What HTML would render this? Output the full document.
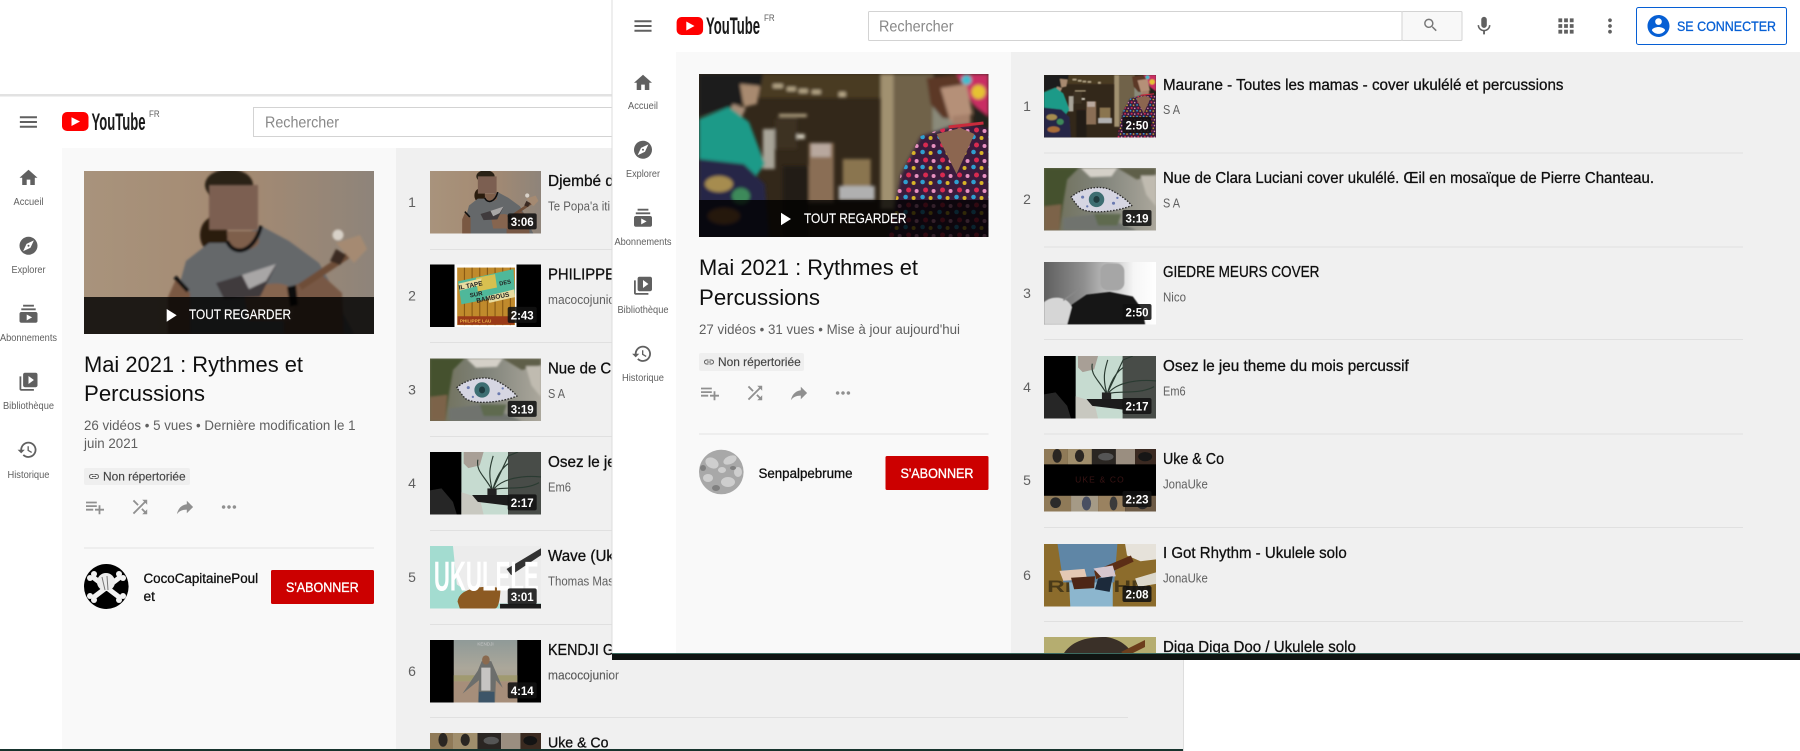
<!DOCTYPE html>
<html lang="fr"><head><meta charset="utf-8"><title>YouTube</title>
<style>
html,body{margin:0;padding:0;background:#fff;width:1800px;height:751px;overflow:hidden}
svg{display:block}
text{font-family:"Liberation Sans",Arial,sans-serif}
.t{font-size:16px;fill:#0f0f0f;stroke:#0f0f0f;stroke-width:.3px}
.c{font-size:13px;fill:#606060}
.n{font-size:14px;fill:#606060;text-anchor:middle}
.s{font-size:10.5px;fill:#606060;text-anchor:middle}
.d{font-size:12px;font-weight:bold;fill:#fff;text-anchor:middle}
.h{font-size:22px;fill:#0f0f0f}
.m{font-size:13.5px;fill:#606060}
.b{font-size:12px;fill:#444;stroke:#444;stroke-width:.15px}
.w{font-size:14px;fill:#fff;stroke:#fff;stroke-width:.15px}
.o{font-size:13.5px;fill:#0f0f0f;stroke:#0f0f0f;stroke-width:.3px}
.r{font-size:14px;fill:#fff;stroke:#fff;stroke-width:.35px}
.y{font-size:24px;font-weight:bold;fill:#1a1a1a}
.f{font-size:9px;fill:#606060}
.q{font-size:16px;fill:#888}
.ic{fill:#606060}
.ac{fill:#909090}
</style></head><body>
<svg xmlns="http://www.w3.org/2000/svg" width="1800" height="751" viewBox="0 0 1800 751" style="overflow:hidden">
<defs>
<filter id="bl" x="-5%" y="-5%" width="110%" height="110%"><feGaussianBlur stdDeviation="1"/></filter>
<filter id="bl2" x="-10%" y="-10%" width="120%" height="120%"><feGaussianBlur stdDeviation="1.6"/></filter>
<filter id="bl3" x="-10%" y="-10%" width="120%" height="120%"><feGaussianBlur stdDeviation="3"/></filter>
<linearGradient id="ga" x1="0" x2="1" y1="0" y2="0"><stop offset="0" stop-color="#a8937c"/><stop offset=".55" stop-color="#a48a72"/><stop offset="1" stop-color="#8e847a"/></linearGradient>
<linearGradient id="ge" x1="0" x2="1" y1="0" y2="0"><stop offset="0" stop-color="#5f5f5f"/><stop offset=".35" stop-color="#8e8e8e"/><stop offset=".6" stop-color="#c4c4c4"/><stop offset=".8" stop-color="#f6f6f6"/><stop offset="1" stop-color="#fff"/></linearGradient>
<linearGradient id="gc" x1="0" x2="1" y1="0" y2="0"><stop offset="0" stop-color="#6d6d55"/><stop offset=".5" stop-color="#80837a"/><stop offset="1" stop-color="#aba79c"/></linearGradient>
<linearGradient id="gh" x1="0" x2="0" y1="0" y2="1"><stop offset="0" stop-color="#8f9a98"/><stop offset=".45" stop-color="#aba79a"/><stop offset="1" stop-color="#a69582"/></linearGradient>
<pattern id="dots" width="17" height="15" patternUnits="userSpaceOnUse">
<circle cx="3" cy="3" r="2.3" fill="#2f9fd0"/><circle cx="11" cy="4" r="2" fill="#d8b428"/><circle cx="6" cy="11" r="2.5" fill="#d82a50"/><circle cx="14" cy="12" r="2" fill="#e890c0"/>
</pattern>

<symbol id="a" viewBox="0 0 290 163" preserveAspectRatio="none">
<rect width="290" height="163" fill="url(#ga)"/>
<g filter="url(#bl)">
<ellipse cx="145" cy="14" rx="24" ry="16" fill="#2c2019"/>
<ellipse cx="130" cy="64" rx="14" ry="18" fill="#2a1a11"/>
<path d="M85 163 95 115 102 90 125 72 142 72 177 55 205 70 235 92 245 110 258 140 270 163z" fill="#65686a"/>
<path d="M92 108 84 126 84 163 106 163 106 122z" fill="#7a5843"/>
<path d="M200 118 238 104 258 122 260 163 200 163z" fill="#785844"/>
<path d="M160 124C182 108 205 110 212 122L208 150 165 150z" fill="#86654f"/>
<path d="M132 112 192 94 176 126 140 128z" fill="#3f3a3c"/>
<path d="M158 104 192 93 182 110 165 118z" fill="#a8a6a6"/>
<path d="M216 116 270 80" stroke="#6e4e38" stroke-width="7"/>
<path d="M252 72 276 64 283 78 270 92z" fill="#a58a72"/>
<path d="M252 78 262 84 256 94 246 90z" fill="#3a2a20"/>
<circle cx="254" cy="64" r="5.5" fill="#d8d1c8"/>
<path d="M143 60H175V72C170 80 150 84 144 72z" fill="#7e5f4c"/>
<path d="M143 70C150 86 170 82 177 55" stroke="#0e0e0e" stroke-width="4" fill="none"/>
<path d="M203 116 212 114 214 134 206 136z" fill="#111"/>
<path d="M91 106 104 120" stroke="#0e0e0e" stroke-width="4"/>
</g>
<rect x="125" y="14" width="49" height="45" fill="#7b5f51" filter="url(#bl)"/>
</symbol>

<symbol id="b" viewBox="0 0 290 163" preserveAspectRatio="none">
<rect width="290" height="163" fill="#33281a"/>
<g filter="url(#bl2)">
<rect x="60" width="122" height="24" fill="#4a3a24"/>
<g fill="#b8a888"><rect x="74" y="10" width="10" height="4"/><rect x="88" y="13" width="9" height="4"/><rect x="100" y="15" width="9" height="4"/><rect x="113" y="16" width="9" height="4"/><rect x="140" y="18" width="7" height="5"/><rect x="80" y="40" width="28" height="3"/></g>
<rect x="86" y="60" width="20" height="5" fill="#cfc9ba"/>
<rect x="76" y="45" width="22" height="30" fill="#3e3224"/>
<rect x="84" y="92" width="26" height="71" fill="#241e16"/>
<rect x="110" y="69" width="25" height="60" fill="#8a6e54"/>
<rect x="112" y="69" width="20" height="14" fill="#b8a89e"/>
<rect x="144" y="85" width="28" height="32" fill="#8a7450"/>
<rect x="140" y="112" width="36" height="14" fill="#b0b0b0"/>
<rect x="64" y="55" width="12" height="40" fill="#a8a498"/>
<rect x="182" width="13" height="135" fill="#a19170"/>
<rect x="195" width="40" height="130" fill="#6f6248"/>
<rect x="234" y="30" width="22" height="40" fill="#8a8a7a"/>
<rect x="276" y="30" width="14" height="40" fill="#23201b"/>
<path d="M0 0H64L62 12 42 30 0 42z" fill="#1b1f1a"/>
<path d="M41 10 61 12 58 30 45 33z" fill="#a88a70"/>
<path d="M34 30 47 34 42 45 28 42z" fill="#a68d78"/>
<path d="M0 45 30 33 50 48 66 90 50 112 0 90z" fill="#1c9a88"/>
<path d="M0 85 45 90 66 110 70 163H0z" fill="#272747"/>
<ellipse cx="20" cy="110" rx="14" ry="8" fill="#a68c50"/>
<ellipse cx="42" cy="122" rx="9" ry="8" fill="#3d8a5a"/>
<ellipse cx="25" cy="142" rx="16" ry="8" fill="#a86c38"/>
<path d="M228 4 262 0 264 46 244 44 232 30z" fill="#5c3826"/>
<path d="M258 0H290V42L274 30z" fill="#c92f63"/>
<circle cx="280" cy="18" r="7" fill="#e6c232"/>
<circle cx="268" cy="6" r="5" fill="#3cbfd0"/>
<path d="M242 14 268 10 274 40 252 48z" fill="#b59078"/>
<path d="M254 42 272 40 272 58 254 56z" fill="#a6806a"/>
<path d="M202 100 222 62 252 52 275 50 290 55V163H190z" fill="#3a1c3c"/>
</g>
<path d="M202 100 222 62 252 52 275 50 290 55V163H190z" fill="url(#dots)"/>
<path d="M238 60 258 100 276 60 262 54z" fill="#8c6650"/>
<path d="M250 53 285 49" stroke="#c92c3c" stroke-width="3"/>
</symbol>

<symbol id="c" viewBox="0 0 290 163" preserveAspectRatio="none">
<rect width="290" height="163" fill="url(#gc)"/>
<g filter="url(#bl3)">
<path d="M0 0H90L60 30 50 90 40 163H0z" fill="#45512f"/>
<path d="M0 100 45 95 40 163H0z" fill="#7c6448"/>
<path d="M95 0H190L175 22 120 24z" fill="#d4d0c8"/>
<path d="M190 0H290V18L240 30z" fill="#5f5f48"/>
<path d="M250 20H290V100L265 70z" fill="#c0bbb0"/>
<path d="M50 130 140 120 240 163H50z" fill="#70736e"/>
<path d="M130 120H200L190 150H140z" fill="#5f6a50"/>
</g>
<path d="M70 76C95 52 150 42 178 60 200 72 218 86 227 98 190 114 115 122 92 104 84 96 76 84 70 76z" fill="#d6d6e2" stroke="#2c2c2c" stroke-width="3.5" stroke-dasharray="4 4"/>
<ellipse cx="136" cy="82" rx="20" ry="20" fill="#3d6e72"/>
<ellipse cx="136" cy="82" rx="8" ry="9" fill="#1f3c40"/>
<g fill="#6a7ab0"><circle cx="100" cy="76" r="4"/><circle cx="180" cy="92" r="4"/><circle cx="112" cy="100" r="3"/><circle cx="190" cy="78" r="3"/></g>
</symbol>

<symbol id="d" viewBox="0 0 290 163" preserveAspectRatio="none">
<rect width="290" height="163" fill="#000"/>
<rect x="64" width="162" height="163" fill="#fff"/>
<rect x="71" y="8" width="151" height="150" fill="#c08a2c"/>
<g stroke="#8a5a14" stroke-width="3"><path d="M90 8V158M110 8V158M130 8V158M150 8V158M170 8V158M190 8V158M210 8V158"/></g>
<path d="M73 44 218 12 222 76 82 104z" fill="#4fb89a"/>
<path d="M120 35 170 25 175 60 125 70z" fill="#d8c050"/>
<path d="M75 50 135 36 130 54 78 68z" fill="#e8dca0"/>
<path d="M150 82 220 65 222 85 155 100z" fill="#e8dca0"/>
<rect x="72" y="135" width="148" height="22" fill="#9a3a18"/>
<text x="76" y="66" font-size="17" font-weight="bold" fill="#222" transform="rotate(-11 76 66)" font-family="Liberation Serif">IL TAPE</text>
<text x="105" y="86" font-size="16" font-weight="bold" fill="#222" transform="rotate(-11 105 86)" font-family="Liberation Serif">SUR</text>
<text x="182" y="55" font-size="15" font-weight="bold" fill="#222" transform="rotate(-11 182 55)" font-family="Liberation Serif">DES</text>
<text x="122" y="100" font-size="17" font-weight="bold" fill="#222" transform="rotate(-11 122 100)" font-family="Liberation Serif">BAMBOUS</text>
<text x="78" y="151" font-size="12" font-weight="bold" fill="#e8b048" font-family="Liberation Serif">PHILIPPE LAU</text>
</symbol>

<symbol id="e" viewBox="0 0 290 163" preserveAspectRatio="none">
<rect width="290" height="163" fill="url(#ge)"/>
<g filter="url(#bl2)">
<path d="M45 130 110 85 170 78 230 90 255 125 262 163H50z" fill="#141414"/>
<path d="M0 105C22 85 62 90 72 118L60 163H0z" fill="#d6d6d6"/>
<path d="M50 100 92 70" stroke="#888" stroke-width="4"/>
</g>
<rect x="146" y="4" width="62" height="70" rx="20" fill="#a6a6a6" filter="url(#bl2)"/>
</symbol>

<symbol id="f" viewBox="0 0 290 163" preserveAspectRatio="none">
<rect width="290" height="163" fill="#000"/>
<rect x="82" width="122" height="163" fill="#c6dbd0"/>
<rect x="204" width="86" height="163" fill="#484c48"/>
<g filter="url(#bl)">
<path d="M88 0H140L130 35 100 42 88 30z" fill="#a89f96"/>
<path d="M0 100 30 95 60 130 70 163H0z" fill="#262626"/>
<path d="M82 105 130 120 140 163H82z" fill="#c8c8c0"/>
<path d="M110 112H205V140L125 130z" fill="#1c1c1c"/>
<path d="M160 95C140 60 120 50 125 20M162 95C150 50 160 30 165 10M165 95C175 60 190 40 205 30M168 95C190 70 240 60 290 65M165 98C200 90 250 100 285 80M165 95 205 10 230 0" stroke="#2a3a30" stroke-width="3" fill="none"/>
<rect x="150" y="95" width="24" height="18" fill="#222"/>
</g>
</symbol>

<symbol id="g" viewBox="0 0 290 163" preserveAspectRatio="none">
<rect width="290" height="163" fill="#a3dcd0"/>
<g filter="url(#bl)">
<path d="M60 0H290V150H140L70 100z" fill="#ececec"/>
<path d="M200 60 290 6V24L212 76z" fill="#333"/>
<path d="M72 145C75 118 110 106 160 106L184 110C184 130 180 163 170 163H78z" fill="#8c5a20"/>
<rect x="183" y="151" width="107" height="12" fill="#1a1a1a"/>
</g>
<text x="10" y="116" font-size="108" font-weight="bold" fill="#fff" textLength="274" lengthAdjust="spacingAndGlyphs">UKULELE</text>
</symbol>

<symbol id="h" viewBox="0 0 290 163" preserveAspectRatio="none">
<rect width="290" height="163" fill="#000"/>
<rect x="62" width="166" height="163" fill="url(#gh)"/>
<g filter="url(#bl)">
<path d="M62 92H228V108H62z" fill="#a09a70"/>
<path d="M62 108H228V163H62z" fill="#a68e7a"/>
<path d="M135 55H160L190 125 172 105 170 163H125L128 105 85 140 125 80z" fill="#6c6e6c"/>
<rect x="134" y="72" width="24" height="60" fill="#c6c4c2"/>
<ellipse cx="146" cy="52" rx="10" ry="12" fill="#8a6a50"/>
<rect x="128" y="135" width="40" height="28" fill="#3c5468"/>
</g>
<text x="145" y="14" font-size="12" fill="#c8c8c8" text-anchor="middle">KENDJI</text>
</symbol>

<symbol id="i" viewBox="0 0 290 163" preserveAspectRatio="none">
<rect width="290" height="163" fill="#000"/>
<g filter="url(#bl)">
<rect width="62" height="40" fill="#8f7a58"/><rect x="62" width="62" height="40" fill="#a08e6c"/><rect x="124" width="62" height="40" fill="#2a2522"/><rect x="186" width="50" height="40" fill="#9a8e80"/><rect x="236" width="54" height="40" fill="#3a2a20"/>
<ellipse cx="34" cy="18" rx="12" ry="18" fill="#2a2622"/><ellipse cx="92" cy="18" rx="12" ry="16" fill="#2a2622"/><ellipse cx="160" cy="20" rx="20" ry="10" fill="#555"/><ellipse cx="262" cy="20" rx="18" ry="12" fill="#141414"/>
<rect y="122" width="70" height="41" fill="#8f7a58"/><rect x="70" y="122" width="70" height="41" fill="#a59a86"/><rect x="140" y="122" width="70" height="41" fill="#9a8260"/><rect x="210" y="122" width="80" height="41" fill="#6c5a44"/>
<ellipse cx="30" cy="140" rx="14" ry="14" fill="#2a2a2a"/><ellipse cx="110" cy="142" rx="12" ry="18" fill="#4a4f62"/><ellipse cx="180" cy="142" rx="10" ry="18" fill="#3a3a3a"/><ellipse cx="255" cy="145" rx="14" ry="12" fill="#2c2c2c"/>
</g>
<text x="145" y="88" font-size="22" fill="#3a1414" text-anchor="middle" letter-spacing="3">UKE &amp; CO</text>
</symbol>

<symbol id="i2" viewBox="0 0 290 42" preserveAspectRatio="none">
<rect width="62" height="42" fill="#8f7a58"/><rect x="62" width="62" height="42" fill="#a08e6c"/><rect x="124" width="62" height="42" fill="#2a2522"/><rect x="186" width="50" height="42" fill="#9a8e80"/><rect x="236" width="54" height="42" fill="#3a2a20"/>
<ellipse cx="34" cy="18" rx="12" ry="18" fill="#2a2622"/><ellipse cx="92" cy="18" rx="12" ry="16" fill="#2a2622"/><ellipse cx="160" cy="20" rx="20" ry="10" fill="#555"/><ellipse cx="262" cy="20" rx="18" ry="12" fill="#141414"/>
</symbol>

<symbol id="j" viewBox="0 0 290 163" preserveAspectRatio="none">
<rect width="290" height="163" fill="#8c6c2c"/>
<text x="8" y="125" font-size="44" font-weight="bold" fill="#4a3a18" textLength="270" lengthAdjust="spacingAndGlyphs">RHYTHM</text>
<g filter="url(#bl)">
<path d="M35 0H190L182 100H50z" fill="#5f86a6"/>
<path d="M65 100H178V163H68z" fill="#8cb6ce"/>
<path d="M210 0H290V40L250 45 215 30z" fill="#e6e2da"/>
<path d="M236 90 290 74V104L244 112z" fill="#dcd8cc"/>
<path d="M40 70 105 65 112 92 50 96z" fill="#e4c8b4"/>
<path d="M70 88 132 84 130 115 78 118z" fill="#4e2812"/>
<path d="M130 70 178 50 225 30 232 46 180 70 135 92z" fill="#5c2e16"/>
<path d="M128 64 178 56 186 84 150 88z" fill="#d6c6ce"/>
<path d="M140 90 178 84 170 125 132 118z" fill="#1d2a3a"/>
</g>
</symbol>

<symbol id="k" viewBox="0 0 112 16" preserveAspectRatio="none">
<rect width="112" height="16" fill="#b5ad70"/>
<path d="M20 16C29 3 44 0 62 0 75 2 83 8 88 16Z" fill="#3a3028"/>
<path d="M77 15 101 3 101 10 83 19z" fill="#6c3e1c"/>
</symbol>

<path id="menu" d="M3 18h18v-2H3v2zm0-5h18v-2H3v2zm0-7v2h18V6H3z"/>
<path id="home" d="M10 20v-6h4v6h5v-8h3L12 3 2 12h3v8z"/>
<path id="explore" d="M12 10.9c-.61 0-1.1.49-1.1 1.1s.49 1.1 1.1 1.1c.61 0 1.1-.49 1.1-1.1s-.49-1.1-1.1-1.1zM12 2C6.48 2 2 6.48 2 12s4.48 10 10 10 10-4.48 10-10S17.52 2 12 2zm2.19 12.19L6 18l3.81-8.19L18 6l-3.81 8.19z"/>
<path id="subs" d="M20 8H4V6h16v2zm-2-6H6v2h12V2zm4 10v8c0 1.1-.9 2-2 2H4c-1.1 0-2-.9-2-2v-8c0-1.1.9-2 2-2h16c1.1 0 2 .9 2 2zm-6 4l-6-3.27v6.53L16 16z"/>
<path id="lib" d="M4 6H2v14c0 1.1.9 2 2 2h14v-2H4V6zm16-4H8c-1.1 0-2 .9-2 2v12c0 1.1.9 2 2 2h12c1.1 0 2-.9 2-2V4c0-1.1-.9-2-2-2zm-8 12.5v-9l6 4.5-6 4.5z"/>
<path id="hist" d="M13 3c-4.97 0-9 4.03-9 9H1l3.89 3.89.07.14L9 12H6c0-3.87 3.13-7 7-7s7 3.13 7 7-3.13 7-7 7c-1.93 0-3.68-.79-4.94-2.06l-1.42 1.42C8.27 19.99 10.51 21 13 21c4.97 0 9-4.03 9-9s-4.03-9-9-9zm-1 5v5l4.28 2.54.72-1.21-3.5-2.08V8H12z"/>
<path id="padd" d="M14 10H2v2h12v-2zm0-4H2v2h12V6zm4 8v-4h-2v4h-4v2h4v4h2v-4h4v-2h-4zM2 16h8v-2H2v2z"/>
<path id="shuf" d="M10.59 9.17L5.41 4 4 5.41l5.17 5.17 1.42-1.41zM14.5 4l2.04 2.04L4 18.59 5.41 20 17.96 7.46 20 9.5V4h-5.5zm.33 9.41l-1.41 1.41 3.13 3.13L14.5 20H20v-5.5l-2.04 2.04-3.13-3.13z"/>
<path id="share" d="M14 9V5l7 7-7 7v-4.1c-5 0-8.5 1.6-11 5.1 1-5 4-10 11-11z"/>
<path id="more" d="M6 10c-1.1 0-2 .9-2 2s.9 2 2 2 2-.9 2-2-.9-2-2-2zm12 0c-1.1 0-2 .9-2 2s.9 2 2 2 2-.9 2-2-.9-2-2-2zm-6 0c-1.1 0-2 .9-2 2s.9 2 2 2 2-.9 2-2-.9-2-2-2z"/>
<path id="link" d="M3.9 12c0-1.71 1.39-3.1 3.1-3.1h4V7H7c-2.76 0-5 2.24-5 5s2.24 5 5 5h4v-1.9H7c-1.71 0-3.1-1.39-3.1-3.1zM8 13h8v-2H8v2zm9-6h-4v1.9h4c1.71 0 3.1 1.39 3.1 3.1s-1.39 3.1-3.1 3.1h-4V17h4c2.76 0 5-2.24 5-5s-2.24-5-5-5z"/>
</defs>

<rect width="1800" height="751" fill="#fff"/>

<!-- LEFT WINDOW -->
<rect x="0" y="94" width="1184" height="2.5" fill="#e2e2e2"/>
<rect x="0" y="96.5" width="1183" height="652" fill="#fff"/>
<rect x="62" y="148" width="334" height="601" fill="#f9f9f9"/>
<rect x="396" y="148" width="787" height="601" fill="#f0f0f0"/>
<rect x="1183" y="96" width="1" height="655" fill="#dedede"/>

<use href="#menu" class="ic" transform="translate(17 110.6) scale(.95)"/>
<rect x="62" y="112" width="26.5" height="19" rx="5" fill="#f00"/>
<path d="M71.5 117.2 80 121.5 71.5 126z" fill="#fff"/>
<text class="y" x="91.5" y="130" textLength="54" lengthAdjust="spacingAndGlyphs">YouTube</text>
<text class="f" x="149" y="117" textLength="10.7" lengthAdjust="spacingAndGlyphs">FR</text>
<rect x="253.5" y="107.5" width="400" height="29" fill="#fff" stroke="#d3d3d3"/>
<text class="q" x="265" y="127.5" textLength="74" lengthAdjust="spacingAndGlyphs">Rechercher</text>

<use href="#home" class="ic" transform="translate(17.7 167) scale(.9)"/>
<text class="s" x="28.5" y="205" textLength="30" lengthAdjust="spacingAndGlyphs">Accueil</text>
<use href="#explore" class="ic" transform="translate(17.7 235) scale(.9)"/>
<text class="s" x="28.5" y="273" textLength="34" lengthAdjust="spacingAndGlyphs">Explorer</text>
<use href="#subs" class="ic" transform="translate(17.7 303) scale(.9)"/>
<text class="s" x="28.5" y="341" textLength="57" lengthAdjust="spacingAndGlyphs">Abonnements</text>
<use href="#lib" class="ic" transform="translate(17.7 371) scale(.9)"/>
<text class="s" x="28.5" y="409" textLength="51" lengthAdjust="spacingAndGlyphs">Bibliothèque</text>
<use href="#hist" class="ic" transform="translate(16.7 439) scale(.9)"/>
<text class="s" x="28.5" y="478" textLength="42" lengthAdjust="spacingAndGlyphs">Historique</text>

<use href="#a" x="84" y="171" width="290" height="163"/>
<rect x="84" y="297" width="290" height="37" fill="#000" fill-opacity=".82"/>
<path d="M166.7 309 176.7 315.3 166.7 321.7z" fill="#fff"/>
<text class="w" x="189" y="319" textLength="102" lengthAdjust="spacingAndGlyphs">TOUT REGARDER</text>
<text class="h" x="84" y="372" textLength="219" lengthAdjust="spacingAndGlyphs">Mai 2021 : Rythmes et</text>
<text class="h" x="84" y="401" textLength="121" lengthAdjust="spacingAndGlyphs">Percussions</text>
<text class="m" x="84" y="430" textLength="271.5" lengthAdjust="spacingAndGlyphs">26 vidéos • 5 vues • Dernière modification le 1</text>
<text class="m" x="84" y="448" textLength="54" lengthAdjust="spacingAndGlyphs">juin 2021</text>
<rect x="84" y="468" width="106" height="17" rx="2" fill="#efefef"/>
<use href="#link" fill="#606060" transform="translate(88 470.5) scale(.5)"/>
<text class="b" x="103" y="480.5" textLength="82.6" lengthAdjust="spacingAndGlyphs">Non répertoriée</text>
<use href="#padd" class="ac" transform="translate(84.2 496.2) scale(.9)"/>
<use href="#shuf" class="ac" transform="translate(129.2 496.2) scale(.9)"/>
<use href="#share" class="ac" transform="translate(174.2 496.2) scale(.9)"/>
<use href="#more" class="ac" transform="translate(218.2 496.2) scale(.9)"/>
<rect x="84" y="547.5" width="290" height="1" fill="#e2e2e2"/>
<ellipse cx="106.3" cy="586.5" rx="22.3" ry="22.5" fill="#000"/>
<g stroke="#f2f2f2" stroke-width="5" stroke-linecap="round"><path d="M94 578 119 597M119 578 94 597"/></g>
<g fill="#f2f2f2"><circle cx="90" cy="578" r="3"/><circle cx="94" cy="574" r="3"/><circle cx="123" cy="578" r="3"/><circle cx="119" cy="574" r="3"/><circle cx="90" cy="596" r="3"/><circle cx="94" cy="600" r="3"/><circle cx="123" cy="596" r="3"/><circle cx="119" cy="600" r="3"/></g>
<ellipse cx="106" cy="582" rx="9" ry="9" fill="#ececec"/>
<path d="M102 577 105 590M107 576 108 590" stroke="#777" stroke-width="1"/>
<text class="o" x="143.5" y="583" textLength="114.6" lengthAdjust="spacingAndGlyphs">CocoCapitainePoul</text>
<text class="o" x="143.5" y="601" textLength="11.5" lengthAdjust="spacingAndGlyphs">et</text>
<rect x="271" y="570" width="103" height="34" rx="1.5" fill="#c00"/>
<text class="r" x="286" y="592" textLength="72.7" lengthAdjust="spacingAndGlyphs">S'ABONNER</text>

<!-- left list -->
<use href="#a" x="430" y="171" width="111" height="62.5"/>
<use href="#d" x="430" y="264.5" width="111" height="62.5"/>
<use href="#c" x="430" y="358.5" width="111" height="62.5"/>
<use href="#f" x="430" y="452" width="111" height="62.5"/>
<use href="#g" x="430" y="546" width="111" height="62.5"/>
<use href="#h" x="430" y="640" width="111" height="62.5"/>
<use href="#i2" x="430" y="733" width="111" height="16"/>
<g fill="#111" fill-opacity=".88">
<rect x="507.7" y="213.4" width="29" height="16" rx="2"/><rect x="507.7" y="306.9" width="29" height="16" rx="2"/><rect x="507.7" y="400.9" width="29" height="16" rx="2"/><rect x="507.7" y="494.4" width="29" height="16" rx="2"/><rect x="507.7" y="588.4" width="29" height="16" rx="2"/><rect x="507.7" y="682.4" width="29" height="16" rx="2"/>
</g>
<text class="d" x="522.2" y="226" textLength="23" lengthAdjust="spacingAndGlyphs">3:06</text>
<text class="d" x="522.2" y="319.5" textLength="23" lengthAdjust="spacingAndGlyphs">2:43</text>
<text class="d" x="522.2" y="413.5" textLength="23" lengthAdjust="spacingAndGlyphs">3:19</text>
<text class="d" x="522.2" y="507" textLength="23" lengthAdjust="spacingAndGlyphs">2:17</text>
<text class="d" x="522.2" y="601" textLength="23" lengthAdjust="spacingAndGlyphs">3:01</text>
<text class="d" x="522.2" y="695" textLength="23" lengthAdjust="spacingAndGlyphs">4:14</text>
<text class="n" x="412" y="207">1</text><text class="n" x="412" y="300.5">2</text><text class="n" x="412" y="394.5">3</text><text class="n" x="412" y="488">4</text><text class="n" x="412" y="582">5</text><text class="n" x="412" y="676">6</text>
<g fill="#e0e0e0"><rect x="430" y="249" width="698" height="1"/><rect x="430" y="342" width="698" height="1"/><rect x="430" y="436" width="698" height="1"/><rect x="430" y="530" width="698" height="1"/><rect x="430" y="624" width="698" height="1"/><rect x="430" y="717" width="698" height="1"/></g>
<text class="t" x="548" y="186" textLength="66" lengthAdjust="spacingAndGlyphs">Djembé d</text>
<text class="c" x="548" y="210.5" textLength="62" lengthAdjust="spacingAndGlyphs">Te Popa'a iti</text>
<text class="t" x="548" y="279.5" textLength="67" lengthAdjust="spacingAndGlyphs">PHILIPPE</text>
<text class="c" x="548" y="304" textLength="71" lengthAdjust="spacingAndGlyphs">macocojunior</text>
<text class="t" x="548" y="373.5" textLength="491" lengthAdjust="spacingAndGlyphs">Nue de Clara Luciani cover ukulélé. Œil en mosaïque de Pierre Chanteau.</text>
<text class="c" x="548" y="398" textLength="17" lengthAdjust="spacingAndGlyphs">S A</text>
<text class="t" x="548" y="467" textLength="245.7" lengthAdjust="spacingAndGlyphs">Osez le jeu theme du mois percussif</text>
<text class="c" x="548" y="491.5" textLength="23" lengthAdjust="spacingAndGlyphs">Em6</text>
<text class="t" x="548" y="561" textLength="66" lengthAdjust="spacingAndGlyphs">Wave (Uk</text>
<text class="c" x="548" y="585.5" textLength="66" lengthAdjust="spacingAndGlyphs">Thomas Mas</text>
<text class="t" x="548" y="655" textLength="66" lengthAdjust="spacingAndGlyphs">KENDJI G</text>
<text class="c" x="548" y="679.5" textLength="71" lengthAdjust="spacingAndGlyphs">macocojunior</text>
<text class="t" x="548" y="747.5" style="font-size:15px" textLength="60.5" lengthAdjust="spacingAndGlyphs">Uke &amp; Co</text>
<rect x="0" y="749" width="1183" height="2" fill="#17342e"/>

<!-- RIGHT WINDOW -->
<rect x="612" y="0" width="1188" height="653" fill="#fff"/>
<rect x="611.5" y="0" width="1" height="653" fill="#dcdcdc"/>
<rect x="676" y="52" width="335" height="601" fill="#f9f9f9"/>
<rect x="1011" y="52" width="789" height="601" fill="#f0f0f0"/>

<use href="#menu" class="ic" transform="translate(631.6 14.6) scale(.95)"/>
<rect x="676.6" y="17" width="26.5" height="18" rx="5" fill="#f00"/>
<path d="M686.3 21.5 694.5 26 686.3 30.5z" fill="#fff"/>
<text class="y" x="706" y="34" textLength="54" lengthAdjust="spacingAndGlyphs">YouTube</text>
<text class="f" x="764" y="21" textLength="10.7" lengthAdjust="spacingAndGlyphs">FR</text>
<rect x="868.5" y="11.5" width="533.5" height="29" rx="1" fill="#fff" stroke="#d3d3d3"/>
<rect x="1402" y="11.5" width="60" height="29" rx="1" fill="#f8f8f8" stroke="#d3d3d3"/>
<text class="q" x="879" y="31.5" textLength="74.5" lengthAdjust="spacingAndGlyphs">Rechercher</text>
<path d="M15.5 14h-.79l-.28-.27C15.41 12.59 16 11.11 16 9.5 16 5.91 13.09 3 9.5 3S3 5.91 3 9.5 5.91 16 9.5 16c1.61 0 3.09-.59 4.23-1.57l.27.28v.79l5 4.99L20.49 19l-4.99-5zm-6 0C7.01 14 5 11.99 5 9.5S7.01 5 9.5 5 14 7.01 14 9.5 11.99 14 9.5 14z" fill="#777" transform="translate(1422 16.5) scale(.72)"/>
<path d="M12 14c1.66 0 3-1.34 3-3V5c0-1.66-1.34-3-3-3S9 3.34 9 5v6c0 1.66 1.34 3 3 3zm5.3-3c0 3-2.54 5.1-5.3 5.1S6.7 14 6.7 11H5c0 3.41 2.72 6.23 6 6.72V21h2v-3.28c3.28-.48 6-3.3 6-6.72h-1.7z" fill="#606060" transform="translate(1473 15) scale(.92)"/>
<path d="M4 8h4V4H4v4zm6 12h4v-4h-4v4zm-6 0h4v-4H4v4zm0-6h4v-4H4v4zm6 0h4v-4h-4v4zm6-10v4h4V4h-4zm-6 4h4V4h-4v4zm6 6h4v-4h-4v4zm0 6h4v-4h-4v4z" fill="#606060" transform="translate(1554.6 14.6) scale(.95)"/>
<path d="M12 8c1.1 0 2-.9 2-2s-.9-2-2-2-2 .9-2 2 .9 2 2 2zm0 2c-1.1 0-2 .9-2 2s.9 2 2 2 2-.9 2-2-.9-2-2-2zm0 6c-1.1 0-2 .9-2 2s.9 2 2 2 2-.9 2-2-.9-2-2-2z" fill="#606060" transform="translate(1598.6 14.6) scale(.95)"/>
<rect x="1636.5" y="7.5" width="150" height="37" rx="2" fill="#fff" stroke="#065fd4"/>
<path d="M12 2C6.48 2 2 6.48 2 12s4.48 10 10 10 10-4.48 10-10S17.52 2 12 2zm0 3c1.66 0 3 1.34 3 3s-1.34 3-3 3-3-1.34-3-3 1.34-3 3-3zm0 14.2c-2.5 0-4.71-1.28-6-3.22.03-1.99 4-3.08 6-3.08 1.99 0 5.97 1.09 6 3.08-1.29 1.94-3.5 3.22-6 3.22z" fill="#065fd4" transform="translate(1645.3 12.8) scale(1.1)"/>
<text x="1677" y="31" font-size="14" fill="#065fd4" stroke="#065fd4" stroke-width=".3" textLength="99" lengthAdjust="spacingAndGlyphs">SE CONNECTER</text>

<use href="#home" class="ic" transform="translate(632.2 72) scale(.9)"/>
<text class="s" x="643" y="109" textLength="30" lengthAdjust="spacingAndGlyphs">Accueil</text>
<use href="#explore" class="ic" transform="translate(632.2 139) scale(.9)"/>
<text class="s" x="643" y="177" textLength="34" lengthAdjust="spacingAndGlyphs">Explorer</text>
<use href="#subs" class="ic" transform="translate(632.2 207) scale(.9)"/>
<text class="s" x="643" y="245" textLength="57" lengthAdjust="spacingAndGlyphs">Abonnements</text>
<use href="#lib" class="ic" transform="translate(632.2 275) scale(.9)"/>
<text class="s" x="643" y="313" textLength="51" lengthAdjust="spacingAndGlyphs">Bibliothèque</text>
<use href="#hist" class="ic" transform="translate(631.2 343) scale(.9)"/>
<text class="s" x="643" y="381" textLength="42" lengthAdjust="spacingAndGlyphs">Historique</text>

<use href="#b" x="699" y="74" width="289.5" height="163"/>
<rect x="699" y="200" width="289.5" height="37" fill="#000" fill-opacity=".78"/>
<path d="M781 212.7 791 219 781 225.3z" fill="#fff"/>
<text class="w" x="804" y="223" textLength="102.5" lengthAdjust="spacingAndGlyphs">TOUT REGARDER</text>
<text class="h" x="699" y="275" textLength="219" lengthAdjust="spacingAndGlyphs">Mai 2021 : Rythmes et</text>
<text class="h" x="699" y="305" textLength="121" lengthAdjust="spacingAndGlyphs">Percussions</text>
<text class="m" x="699" y="334" textLength="261" lengthAdjust="spacingAndGlyphs">27 vidéos • 31 vues • Mise à jour aujourd'hui</text>
<rect x="699" y="353" width="105" height="18" rx="2" fill="#efefef"/>
<use href="#link" fill="#606060" transform="translate(703 356) scale(.5)"/>
<text class="b" x="718" y="366" textLength="82.7" lengthAdjust="spacingAndGlyphs">Non répertoriée</text>
<use href="#padd" class="ac" transform="translate(699.2 382.2) scale(.9)"/>
<use href="#shuf" class="ac" transform="translate(744.2 382.2) scale(.9)"/>
<use href="#share" class="ac" transform="translate(788.2 382.2) scale(.9)"/>
<use href="#more" class="ac" transform="translate(832.2 382.2) scale(.9)"/>
<rect x="699" y="433.5" width="289.5" height="1" fill="#e2e2e2"/>
<ellipse cx="721.3" cy="472" rx="22.3" ry="22.3" fill="#a8a8a8"/>
<g fill="#cecece"><ellipse cx="712" cy="463" rx="7" ry="5" transform="rotate(30 712 463)"/><ellipse cx="730" cy="460" rx="7" ry="4" transform="rotate(-25 730 460)"/><ellipse cx="728" cy="482" rx="7" ry="5"/><ellipse cx="708" cy="478" rx="5" ry="4"/><ellipse cx="722" cy="470" rx="4" ry="3"/><ellipse cx="738" cy="472" rx="4" ry="5"/></g>
<g fill="#808080"><ellipse cx="716" cy="488" rx="4" ry="3"/><ellipse cx="733" cy="468" rx="3" ry="2"/><ellipse cx="703" cy="468" rx="3" ry="3"/></g>
<text class="o" x="758.5" y="478" textLength="94" lengthAdjust="spacingAndGlyphs">Senpalpebrume</text>
<rect x="885.5" y="456" width="103" height="34" rx="1.5" fill="#c00"/>
<text class="r" x="900.5" y="478" textLength="73" lengthAdjust="spacingAndGlyphs">S'ABONNER</text>

<!-- right list -->
<use href="#b" x="1044" y="75" width="112" height="62.5"/>
<use href="#c" x="1044" y="168" width="112" height="62.5"/>
<use href="#e" x="1044" y="262" width="112" height="62.5"/>
<use href="#f" x="1044" y="356" width="112" height="62.5"/>
<use href="#i" x="1044" y="449" width="112" height="62.5"/>
<use href="#j" x="1044" y="544" width="112" height="62.5"/>
<use href="#k" x="1044" y="637" width="112" height="16"/>
<g fill="#111" fill-opacity=".88">
<rect x="1122.5" y="117" width="29" height="16" rx="2"/><rect x="1122.5" y="210" width="29" height="16" rx="2"/><rect x="1122.5" y="304" width="29" height="16" rx="2"/><rect x="1122.5" y="398" width="29" height="16" rx="2"/><rect x="1122.5" y="491" width="29" height="16" rx="2"/><rect x="1122.5" y="586" width="29" height="16" rx="2"/>
</g>
<text class="d" x="1137" y="129.5" textLength="23" lengthAdjust="spacingAndGlyphs">2:50</text>
<text class="d" x="1137" y="222.5" textLength="23" lengthAdjust="spacingAndGlyphs">3:19</text>
<text class="d" x="1137" y="316.5" textLength="23" lengthAdjust="spacingAndGlyphs">2:50</text>
<text class="d" x="1137" y="410.5" textLength="23" lengthAdjust="spacingAndGlyphs">2:17</text>
<text class="d" x="1137" y="503.5" textLength="23" lengthAdjust="spacingAndGlyphs">2:23</text>
<text class="d" x="1137" y="598.5" textLength="23" lengthAdjust="spacingAndGlyphs">2:08</text>
<text class="n" x="1027" y="111">1</text><text class="n" x="1027" y="204">2</text><text class="n" x="1027" y="298">3</text><text class="n" x="1027" y="392">4</text><text class="n" x="1027" y="485">5</text><text class="n" x="1027" y="580">6</text>
<g fill="#e0e0e0"><rect x="1044" y="152.5" width="699" height="1"/><rect x="1044" y="246.5" width="699" height="1"/><rect x="1044" y="339" width="699" height="1"/><rect x="1044" y="433.5" width="699" height="1"/><rect x="1044" y="527" width="699" height="1"/><rect x="1044" y="621" width="699" height="1"/></g>
<text class="t" x="1163" y="90" textLength="400.5" lengthAdjust="spacingAndGlyphs">Maurane - Toutes les mamas - cover ukulélé et percussions</text>
<text class="c" x="1163" y="114" textLength="17" lengthAdjust="spacingAndGlyphs">S A</text>
<text class="t" x="1163" y="183" textLength="491" lengthAdjust="spacingAndGlyphs">Nue de Clara Luciani cover ukulélé. Œil en mosaïque de Pierre Chanteau.</text>
<text class="c" x="1163" y="207.5" textLength="17" lengthAdjust="spacingAndGlyphs">S A</text>
<text class="t" x="1163" y="277" textLength="156.4" lengthAdjust="spacingAndGlyphs">GIEDRE MEURS COVER</text>
<text class="c" x="1163" y="301.5" textLength="23" lengthAdjust="spacingAndGlyphs">Nico</text>
<text class="t" x="1163" y="371" textLength="245.7" lengthAdjust="spacingAndGlyphs">Osez le jeu theme du mois percussif</text>
<text class="c" x="1163" y="395.5" textLength="22.6" lengthAdjust="spacingAndGlyphs">Em6</text>
<text class="t" x="1163" y="464" textLength="61" lengthAdjust="spacingAndGlyphs">Uke &amp; Co</text>
<text class="c" x="1163" y="488.5" textLength="44.8" lengthAdjust="spacingAndGlyphs">JonaUke</text>
<text class="t" x="1163" y="558" textLength="183.7" lengthAdjust="spacingAndGlyphs">I Got Rhythm - Ukulele solo</text>
<text class="c" x="1163" y="582.5" textLength="44.8" lengthAdjust="spacingAndGlyphs">JonaUke</text>
<text class="t" x="1163" y="652" textLength="192.9" lengthAdjust="spacingAndGlyphs">Diga Diga Doo / Ukulele solo</text>

<!-- bottom bar of right window, then left window remainder -->
<rect x="612" y="653" width="1188" height="98" fill="#fff"/>
<rect x="612" y="660" width="571" height="89" fill="#f0f0f0"/>
<rect x="1183" y="660" width="1" height="91" fill="#dedede"/>
<rect x="612" y="717" width="516" height="1" fill="#e0e0e0"/>
<text class="c" x="548" y="679.5" textLength="71" lengthAdjust="spacingAndGlyphs">macocojunior</text>
<rect x="612" y="749" width="571" height="2" fill="#17342e"/>
<rect x="612" y="653" width="1188" height="7" fill="#0f1412"/>
<rect x="612" y="653" width="1188" height="1" fill="#3c6a60"/>
</svg>
</body></html>
